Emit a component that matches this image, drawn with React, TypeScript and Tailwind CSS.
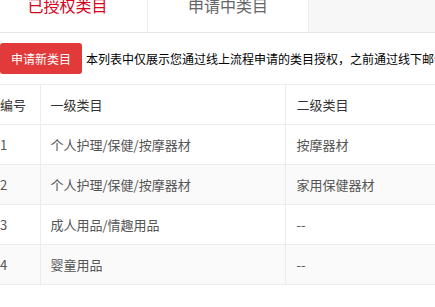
const rows = [
  { id: 1, first: "个人护理/保健/按摩器材", second: "按摩器材" },
  { id: 2, first: "个人护理/保健/按摩器材", second: "家用保健器材" },
  { id: 3, first: "成人用品/情趣用品", second: "--" },
  { id: 4, first: "婴童用品", second: "--" },
]

const font = { fontFamily: '"Noto Sans CJK SC", "Noto Sans", sans-serif' }

export default function App() {
  return (
    <div className="w-[435px] h-[307px] overflow-hidden bg-white" style={font}>
      <div className="-ml-[12px] -mt-[22px] w-[470px]">
        {/* tabs */}
        <div className="flex bg-[#f7f7f7] border-b border-[#e8e8e8]">
          <div className="w-[160px] h-[54px] flex items-center justify-center bg-white border-r border-[#ececec] text-[16px] text-[#d9001b]">
            已授权类目
          </div>
          <div className="w-[161px] h-[54px] flex items-center justify-center bg-white border-r border-[#ececec] text-[16px] text-[#666]">
            申请中类目
          </div>
        </div>

        {/* notice */}
        <div className="flex items-center gap-[4px] pl-[12px] mt-[10px] h-[31px]">
          <button className="h-[31px] w-[82px] shrink-0 rounded-[3px] bg-[#e23a3a] text-white text-[12px]">
            申请新类目
          </button>
          <span className="text-[12px] text-black whitespace-nowrap">
            本列表中仅展示您通过线上流程申请的类目授权，之前通过线下邮件申请的类目授权请联系小二查询
          </span>
        </div>

        {/* table */}
        <table className="mt-[10px] border-collapse text-[13px] w-[480px] table-fixed">
          <colgroup>
            <col className="w-[52px]" />
            <col className="w-[245px]" />
            <col />
          </colgroup>
          <thead>
            <tr className="h-[40px] bg-white text-[#333]">
              <th className="border border-[#ececec] border-l-0 pl-[12px] text-left font-normal">编号</th>
              <th className="border border-[#ececec] pl-[10px] text-left font-normal">一级类目</th>
              <th className="border border-[#ececec] pl-[11px] text-left font-normal">二级类目</th>
            </tr>
          </thead>
          <tbody>
            {rows.map((r, i) => (
              <tr key={r.id} className={`h-[40px] text-[#555] ${i % 2 === 1 ? "bg-[#fafafa]" : "bg-white"}`}>
                <td className="border border-[#ececec] border-l-0 pl-[12px]">{r.id}</td>
                <td className="border border-[#ececec] pl-[10px]">{r.first}</td>
                <td className="border border-[#ececec] pl-[11px]">{r.second}</td>
              </tr>
            ))}
          </tbody>
        </table>
      </div>
    </div>
  )
}
